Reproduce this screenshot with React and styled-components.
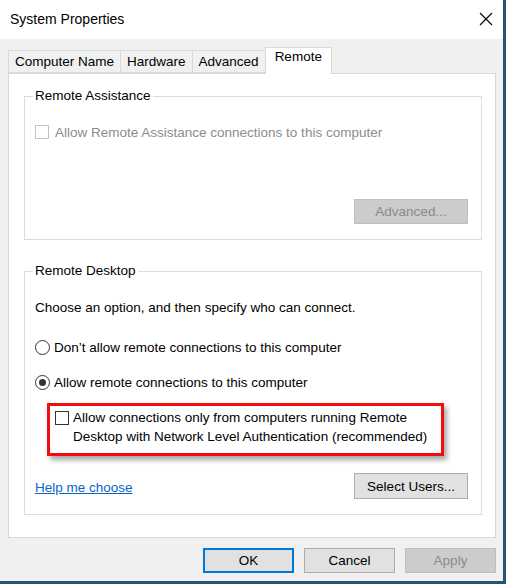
import React from 'react'
import styled, { createGlobalStyle } from 'styled-components'

const GlobalStyle = createGlobalStyle`
  html, body {
    margin: 0;
    padding: 0;
    background: #f0f0f0;
  }
  body {
    font-family: "Liberation Sans", Arial, sans-serif;
    font-size: 13.5px;
    color: #000;
  }
`

const tabs = ['Computer Name', 'Hardware', 'Advanced', 'Remote']

export default function App() {
  return (
    <Window>
      <GlobalStyle />
      {/* title bar */}
      <TitleBar>
        <Title>System Properties</Title>
        <CloseButton aria-label="Close">
          <svg width="14" height="14" viewBox="0 0 14 14">
            <path d="M1 1 L13 13 M13 1 L1 13" stroke="#000" strokeWidth="1.1" fill="none" />
          </svg>
        </CloseButton>
      </TitleBar>

      <Body>
        <TabRow>
          {tabs.map(t => (
            <Tab key={t} selected={t === 'Remote'}>{t}</Tab>
          ))}
        </TabRow>

        <Panel>
          {/* Remote Assistance */}
          <Group>
            <Legend>Remote Assistance</Legend>
            <CheckRow disabled>
              <CheckBox disabled />
              Allow Remote Assistance connections to this computer
            </CheckRow>
            <RightRow>
              <Button disabled wide>Advanced...</Button>
            </RightRow>
          </Group>

          {/* Remote Desktop */}
          <Group second>
            <Legend>Remote Desktop</Legend>
            <Hint>Choose an option, and then specify who can connect.</Hint>
            <RadioRow>
              <Radio />
              Don’t allow remote connections to this computer
            </RadioRow>
            <RadioRow tight>
              <Radio checked />
              Allow remote connections to this computer
            </RadioRow>
            <Highlight>
              <CheckBox top />
              <span>
                Allow connections only from computers running Remote<br />
                Desktop with Network Level Authentication (recommended)
              </span>
            </Highlight>
            <FooterRow>
              <HelpLink href="#">Help me choose</HelpLink>
              <Button wide tall>Select Users...</Button>
            </FooterRow>
          </Group>
        </Panel>

        <DialogButtons>
          <Button primary>OK</Button>
          <Button>Cancel</Button>
          <Button disabled>Apply</Button>
        </DialogButtons>
      </Body>
    </Window>
  )
}

// window frame
const Window = styled.div`
  width: 503px;
  height: 581px;
  border-right: 3px solid #24566e;
  border-bottom: 3px solid #24566e;
  display: flex;
  flex-direction: column;
  background: #f0f0f0;
`

const TitleBar = styled.div`
  height: 37px;
  background: #fff;
  display: flex;
  align-items: center;
  justify-content: space-between;
  padding: 0 9px 2px 10px;
`

const Title = styled.div`
  font-size: 14px;
`

const CloseButton = styled.div`
  width: 16px;
  height: 16px;
  display: flex;
  align-items: center;
  justify-content: center;
`

const Body = styled.div`
  flex: 1;
  padding: 8px 7px 0 8px;
  display: flex;
  flex-direction: column;
`

// tabs
const TabRow = styled.div`
  height: 26px;
  display: flex;
  align-items: flex-end;
  padding-left: 1px;
  position: relative;
  z-index: 1;
`

const Tab = styled.div`
  height: ${p => (p.selected ? '27px' : '23px')};
  margin-bottom: ${p => (p.selected ? '-1px' : '0')};
  margin-left: -1px;
  padding: ${p => (p.selected ? '1px 9px 0' : '3px 6px 0')};
  box-sizing: border-box;
  border: 1px solid #d9d9d9;
  border-bottom: ${p => (p.selected ? 'none' : '1px solid #d9d9d9')};
  background: ${p => (p.selected ? '#fff' : '#f0f0f0')};
  white-space: nowrap;
`

const Panel = styled.div`
  height: 465px;
  box-sizing: border-box;
  background: #fff;
  border: 1px solid #d9d9d9;
  padding: 14px 13px 0 15px;
`

// group boxes
const Group = styled.fieldset`
  margin: ${p => (p.second ? '23px 0 0' : '0')};
  padding: 0 13px 15px 10px;
  border: 1px solid #dcdcdc;
  min-inline-size: 0;
`

const Legend = styled.legend`
  padding: 0 2px;
  margin-left: -2px;
  line-height: 16px;
`

const CheckRow = styled.label`
  display: flex;
  align-items: center;
  gap: 6px;
  height: 18px;
  margin-top: 19px;
  color: ${p => (p.disabled ? '#8c8c8c' : '#000')};
`

const CheckBox = styled.span`
  width: 14px;
  height: 14px;
  box-sizing: border-box;
  flex: none;
  background: #fff;
  border: 1px solid ${p => (p.disabled ? '#c4c4c4' : '#333')};
  margin-top: ${p => (p.top ? '3px' : '0')};
`

const RightRow = styled.div`
  display: flex;
  justify-content: flex-end;
  margin-top: 58px;
`

const Hint = styled.div`
  line-height: 17px;
  margin-top: 20px;
`

const RadioRow = styled.label`
  display: flex;
  align-items: center;
  gap: 4px;
  height: 18px;
  margin-top: ${p => (p.tight ? '17px' : '22px')};
`

const Radio = styled.span`
  width: 15px;
  height: 15px;
  box-sizing: border-box;
  border-radius: 50%;
  border: 1px solid #333;
  background: #fff;
  display: flex;
  align-items: center;
  justify-content: center;
  &::after {
    content: '';
    display: ${p => (p.checked ? 'block' : 'none')};
    width: 7px;
    height: 7px;
    border-radius: 50%;
    background: #333;
  }
`

// the red annotation frame round the NLA checkbox
const Highlight = styled.div`
  width: 397px;
  margin: 12px 0 0 12px;
  box-sizing: border-box;
  border: 3px solid #f20d0d;
  box-shadow: 3px 4px 5px rgba(0, 0, 0, 0.35);
  padding: 2px 10px 7px 5px;
  display: flex;
  align-items: flex-start;
  gap: 4px;
  line-height: 19px;
`

const FooterRow = styled.div`
  display: flex;
  align-items: center;
  justify-content: space-between;
  margin-top: 17px;
`

const HelpLink = styled.a`
  color: #0b64c8;
  text-decoration: underline;
  margin-top: 3px;
`

// buttons
const Button = styled.button`
  font-family: inherit;
  font-size: 13.5px;
  width: ${p => (p.wide ? '114px' : '91px')};
  height: ${p => (p.tall ? '26px' : '25px')};
  padding: 0;
  background: ${p => (p.disabled ? '#cccccc' : '#e1e1e1')};
  color: ${p => (p.disabled ? '#8a8a8a' : '#000')};
  border: ${p => (p.primary ? '2px solid #0078d7' : `1px solid ${p.disabled ? '#bfbfbf' : '#adadad'}`)};
  border-radius: 0;
`

const DialogButtons = styled.div`
  display: flex;
  justify-content: flex-end;
  gap: 10px;
  margin-top: 10px;
`
